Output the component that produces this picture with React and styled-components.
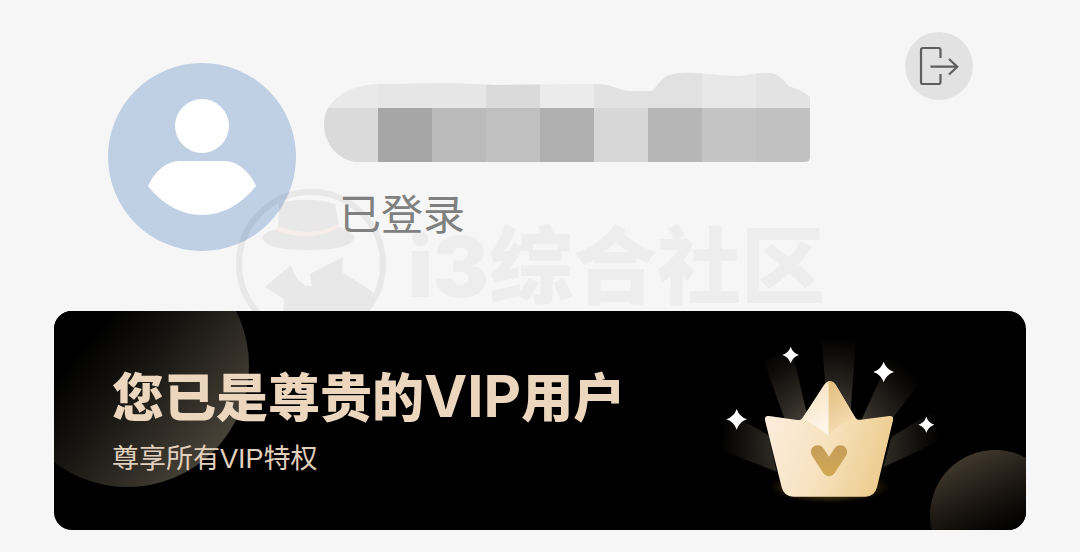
import React from 'react'
import styled, { createGlobalStyle } from 'styled-components';

const GlobalStyle = createGlobalStyle`
  * {
    box-sizing: border-box;
  }

  body {
    margin: 0;
    background: #f6f6f6;
    font-family: "Noto Sans CJK SC", "Noto Sans", sans-serif;
  }
`;

const Page = styled.main`
  padding: 32px 54px 22px;
`;

const Header = styled.header`
  position: relative;
  display: flex;
  align-items: flex-start;
  min-height: 279px;
  padding: 0 53px 0 54px;
`;

const Avatar = styled.svg`
  flex: none;
  width: 188px;
  height: 188px;
  margin-top: 31px;
`;

const UserInfo = styled.div`
  flex: 1;
  display: flex;
  flex-direction: column;
  gap: 26px;
  padding: 40px 0 0 28px;
`;

const HiddenName = styled.svg`
  width: 486px;
  height: 90px;
`;

const Status = styled.p`
  position: relative;
  z-index: 1;
  margin: 0;
  padding-left: 15px;
  color: #808080;
  font-size: 42px;
  line-height: 48px;
`;

const LogoutButton = styled.button`
  flex: none;
  width: 68px;
  height: 68px;
  padding: 0;
  border: 0;
  border-radius: 50%;
  background: #e2e2e2;
  cursor: pointer;
`;

const Watermark = styled.div`
  position: absolute;
  left: 182px;
  top: 156px;
  display: flex;
  align-items: flex-start;
  gap: 22px;
  color: #000;
  opacity: 0.05;
  pointer-events: none;
`;

const WatermarkText = styled.span`
  padding-top: 37px;
  opacity: 0.65;
  font-family: Inter, "Noto Sans CJK SC", sans-serif;
  font-size: 84px;
  font-weight: 900;
  line-height: 84px;
  white-space: nowrap;
`;

const VipCard = styled.section`
  position: relative;
  display: flex;
  justify-content: space-between;
  align-items: flex-start;
  min-height: 219px;
  padding: 9px 66px 0 58px;
  border-radius: 18px;
  background: #000;
  overflow: hidden;
`;

const Planet = styled.span`
  position: absolute;
  border-radius: 50%;
  width: ${props => props.$size}px;
  height: ${props => props.$size}px;
`;

const LeftPlanet = styled(Planet)`
  left: -48px;
  top: -67px;
  background: linear-gradient(130deg, #000 36%, #171511 54%, #4b463b 88%);
`;

const RightPlanet = styled(Planet)`
  right: -34px;
  top: 139px;
  background: linear-gradient(155deg, #463c30 8%, #17130f 42%, #000 62%);
`;

const VipText = styled.div`
  position: relative;
  display: flex;
  flex-direction: column;
  gap: 24px;
  padding-top: 49px;
  white-space: nowrap;
`;

const Title = styled.h1`
  margin: 0;
  color: #ecd6bd;
  font-size: 52px;
  font-weight: 900;
  line-height: 52px;
`;

const Latin = styled.span`
  font-family: Inter, sans-serif;
  font-size: 58px;
  font-weight: 700;
  line-height: 0;
`;

const Subtitle = styled.p`
  margin: 0;
  color: #e2d0bd;
  font-family: "Liberation Sans", "Noto Sans CJK SC", sans-serif;
  font-size: 27px;
  line-height: 28px;
`;

const Crown = styled.svg`
  flex: none;
  width: 260px;
  height: 190px;
`;

const topCells = ['#e9e9e9', '#e6e6e6', '#e6e6e6', '#dadada', '#ebebeb', '#e2e2e2', '#e1e1e1', '#e8e8e8', '#e3e3e3']
const bottomCells = ['#dadada', '#a6a6a6', '#bbbbbb', '#c0c0c0', '#b0b0b0', '#d7d7d7', '#b6b6b6', '#c4c4c4', '#c1c1c1']

const stars = [
  { x: 272, y: 105, r: 25 },
  { x: 551, y: 156, r: 31 },
  { x: 110, y: 298, r: 31 },
  { x: 679, y: 314, r: 24 },
]

function Star({ x, y, r }) {
  const c = r * 0.25
  return (
    <path
      fill="#fff"
      d={`M${x} ${y - r}Q${x + c} ${y - c} ${x + r} ${y}Q${x + c} ${y + c} ${x} ${y + r}Q${x - c} ${y + c} ${x - r} ${y}Q${x - c} ${y - c} ${x} ${y - r}Z`}
    />
  )
}

function CrownArt() {
  return (
    <Crown viewBox="0 0 780 570" aria-hidden="true">
      <defs>
        <radialGradient id="ray" gradientUnits="userSpaceOnUse" cx="390" cy="380" r="350">
          <stop offset="0.2" stopColor="#544d40" />
          <stop offset="0.5" stopColor="#2c2822" />
          <stop offset="0.75" stopColor="#13110f" />
          <stop offset="0.95" stopColor="#000" />
        </radialGradient>
        <radialGradient id="glow">
          <stop offset="0.6" stopColor="#3a2a0c" />
          <stop offset="1" stopColor="#3a2a0c" stopOpacity="0" />
        </radialGradient>
        <linearGradient id="body" x1="0" y1="0.3" x2="1" y2="0.6">
          <stop offset="0" stopColor="#fbecdc" />
          <stop offset="0.5" stopColor="#f8e3c0" />
          <stop offset="1" stopColor="#eccb8c" />
        </linearGradient>
        <linearGradient id="shade" x1="0" y1="0" x2="0.3" y2="1">
          <stop offset="0" stopColor="#f6e0bc" />
          <stop offset="1" stopColor="#fdf5e8" />
        </linearGradient>
        <linearGradient id="fold" x1="0" y1="0" x2="0.3" y2="1">
          <stop offset="0" stopColor="#e3bd7c" />
          <stop offset="1" stopColor="#f5deb6" />
        </linearGradient>
        <linearGradient id="mark" x1="0" y1="0" x2="0" y2="1">
          <stop offset="0" stopColor="#c79f58" />
          <stop offset="1" stopColor="#d0a754" />
        </linearGradient>
      </defs>
      <g fill="url(#ray)">
        <path d="M362 30H470L450 300H385Z" />
        <path d="M190 120L275 85L325 300H255Z" />
        <path d="M570 110L690 150L580 292L480 310Z" />
        <path d="M20 240L100 285L205 345L230 455L20 375Z" />
        <path d="M575 350L690 280L780 240V335L550 442Z" />
      </g>
      <ellipse cx="390" cy="500" rx="180" ry="50" fill="url(#glow)" />
      <path
        fill="url(#body)"
        d="M207 288L292 300Q304 302 310 291L373 194Q390 172 407 194L464 290Q470 301 482 299L568 288Q582 287 579 301L531 502Q524 530 496 530H280Q252 530 245 502L195 301Q193 286 207 288Z"
      />
      <path fill="url(#shade)" d="M386 184Q378 186 373 194L306 297Q350 315 386 348Z" />
      <path fill="url(#fold)" d="M386 184Q400 183 407 194L468 297Q415 308 386 348Z" />
      <path d="M353 396L387 448L421 396" fill="none" stroke="url(#mark)" strokeWidth="41" strokeLinecap="round" strokeLinejoin="round" />
      {stars.map((star) => <Star key={star.x} {...star} />)}
    </Crown>
  )
}

function App() {
  return (
    <Page>
      <GlobalStyle />
      <Header>
        <Avatar viewBox="0 0 188 188" role="img" aria-label="头像">
          <circle cx="94" cy="94" r="94" fill="#bfcfe4" />
          <circle cx="94" cy="63" r="27" fill="#fff" />
          <path fill="#fff" d="M40 123C46 110 57 98 72 98H116C131 98 142 110 148 123C133 142 114 152 94 152S55 142 40 123Z" />
        </Avatar>
        <UserInfo>
          <HiddenName viewBox="0 0 486 90" aria-hidden="true">
            <clipPath id="smear">
              <path d="M0 52C0 30 22 13 54 12L130 11L170 13L271 12C290 12 295 19 306 19H326C334 19 333 1 358 1C375 0 395 4 413 4C425 4 425 1 446 1C456 1 462 12 466 15C475 17 480 20 486 25V85Q486 90 481 90H32C14 88 0 72 0 52Z" />
            </clipPath>
            <g clipPath="url(#smear)" shapeRendering="crispEdges">
              {topCells.map((color, i) => <rect key={i} x={i * 54} y="0" width="54" height="36" fill={color} />)}
              {bottomCells.map((color, i) => <rect key={i} x={i * 54} y="36" width="54" height="54" fill={color} />)}
            </g>
          </HiddenName>
          <Status>已登录</Status>
        </UserInfo>
        <LogoutButton type="button" aria-label="退出登录">
          <svg width="68" height="68" viewBox="0 0 68 68" fill="none" stroke="#5e5e5e" strokeWidth="2.2" aria-hidden="true">
            <path d="M35.5 26V18Q35.5 16 33.5 16H18Q16 16 16 18V50Q16 52 18 52H33.5Q35.5 52 35.5 50V42" />
            <path d="M25.5 34.7H52M44 27L52.3 34.7L44 42.5" />
          </svg>
        </LogoutButton>
        <Watermark aria-hidden="true">
          <svg width="150" height="152" viewBox="0 0 150 152">
            <circle cx="75" cy="76" r="72" fill="none" stroke="#000" strokeWidth="6" />
            <path d="M43 15Q75 8 99 16L103 37Q75 50 42 39Z" />
            <path d="M41 41Q30 43 26 49Q28 62 72 62Q116 62 119 49Q113 41 103 39Q75 53 41 41Z" />
            <path d="M41 38Q75 51 102 36V40Q75 55 41 43Z" fill="#ff5a1f" />
            <path d="M29 99L55 77Q59 92 70 98L76 98L74 86L107 69L106 84L137 104Q132 128 112 142H46L48 111Z" />
          </svg>
          <WatermarkText>i3综合社区</WatermarkText>
        </Watermark>
      </Header>
      <VipCard>
        <LeftPlanet $size={243} />
        <RightPlanet $size={130} />
        <VipText>
          <Title>您已是尊贵的<Latin>VIP</Latin>用户</Title>
          <Subtitle>尊享所有VIP特权</Subtitle>
        </VipText>
        <CrownArt />
      </VipCard>
    </Page>
  )
}

export default App
